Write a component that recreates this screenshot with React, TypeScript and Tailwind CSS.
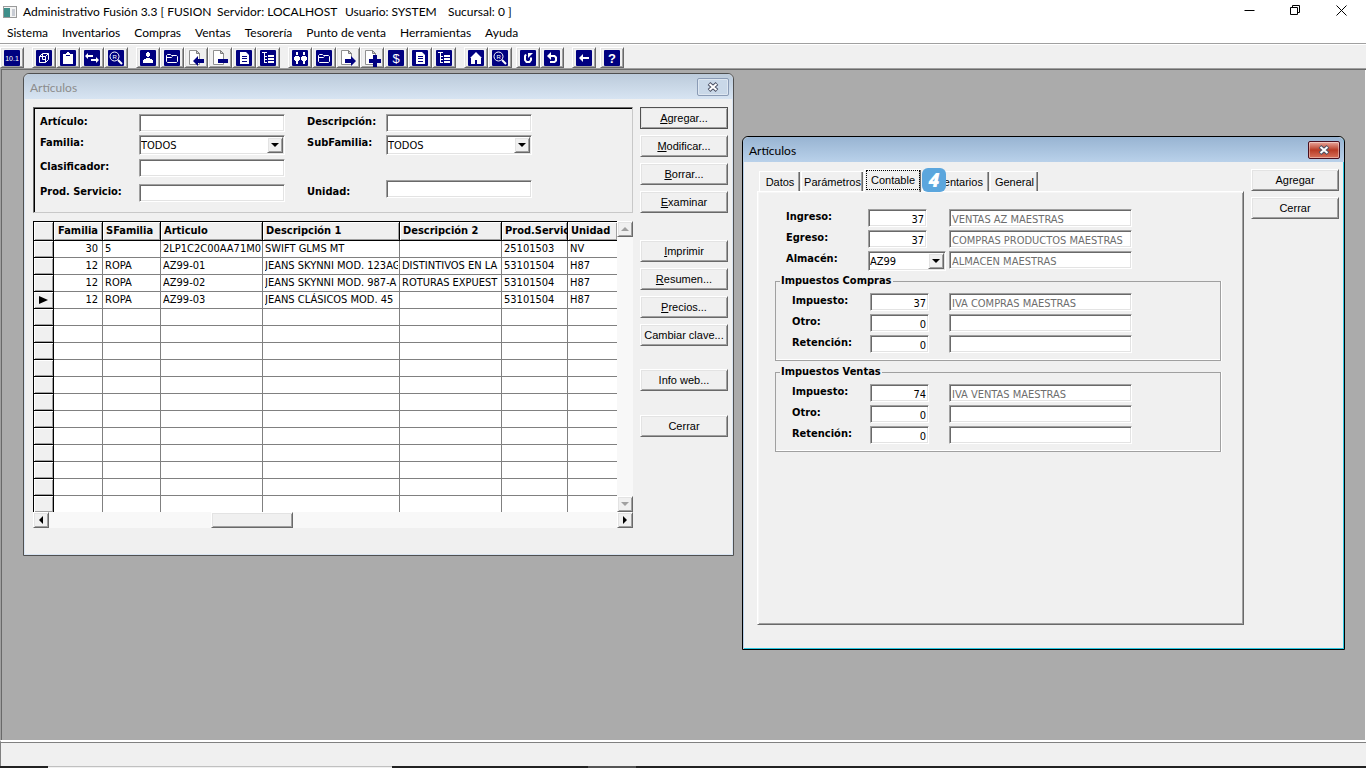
import { FC, ReactNode } from 'react'
import clsx from 'clsx'

const menus = ['Sistema', 'Inventarios', 'Compras', 'Ventas', 'Tesorería', 'Punto de venta', 'Herramientas', 'Ayuda']

const raised =
  'border border-t-white border-l-white border-r-[#696969] border-b-[#696969] bg-[#f0f0f0] shadow-[inset_1px_1px_0_#e3e3e3,inset_-1px_-1px_0_#a0a0a0]'
const sunken =
  'border border-t-[#a0a0a0] border-l-[#a0a0a0] border-r-white border-b-white bg-white shadow-[inset_1px_1px_0_#696969,inset_-1px_-1px_0_#e3e3e3]'
const tahoma = "font-['DejaVu_Sans_Condensed','Noto_Sans',sans-serif] text-[11px]"
const sansSerif = "font-['Liberation_Sans',sans-serif] text-[11px] leading-[14px]"
const segoe = "font-['Lato','Open_Sans',sans-serif] text-[12px] leading-[16px]"

// Toolbar glyphs, drawn on a 16x16 grid
const glyphs: Record<string, ReactNode> = {
  cube: <path fill="none" stroke="#fff" d="M3.5 6.5h6v6h-6zM3.5 6.5l3-3h6v6l-3 3M9.5 6.5l3-3M6.5 4v5.500h3" />,
  clipboard: <path fill="#fff" d="M3 4h3v2h4V4h3v10H3zM6 3h1V2h2v1h1v2H6z" />,
  swap: <path fill="#fff" d="M1 6l3-3v2h5v2H4v2zM15 10l-3-3v2H7v2h5v2z" />,
  search: (
    <g>
      <circle cx="6.500" cy="6.500" r="4.500" fill="none" stroke="#fff" />
      <path d="M10 10l4 4" stroke="#fff" strokeWidth="2" />
      <text x="4.500" y="9" fill="#fff" fontFamily="Liberation Sans" fontSize="6">R</text>
    </g>
  ),
  person: <path fill="#fff" d="M7 2h2v1h1v3H9v1H7V6H6V3h1zM6 8h4v1h2v1h1v3H3v-3h1V9h2z" />,
  folder: <path fill="none" stroke="#fff" d="M2.500 11.500v-6l1-1h3l1 1h5l1 1v5l-1 1h-9zM2.500 7.500h5l1-1" />,
  list: (
    <g>
      <path fill="#fff" d="M4 2h6l3 3v9H4z" />
      <path fill="#000080" d="M6 6h5v1H6zM6 8h5v1H6zM6 11h5v1H6z" />
    </g>
  ),
  tree: <path fill="#fff" d="M2 2h5v1H2zM4 3h1v10H4zM4 6h3v1H4zM8 5h6v2H8zM4 9h3v1H4zM8 8h6v2H8zM4 12h3v1H4zM8 11h6v2H8z" />,
  people: (
    <g fill="#fff">
      <path d="M4 2h2v3H4zM3 6h4v1h1v3H7v1H6v3H4v-3H3v-1H2V7h1z" />
      <path d="M11 2h2v3h-2zM10 6h4v1h1v3h-1v1h-1v3h-2v-3h-1v-1H9V7h1z" />
    </g>
  ),
  home: <path fill="#fff" d="M8 2l6 6h-1v6H9v-4H7v4H3V8H2z" />,
  redo: (
    <g>
      <path fill="none" stroke="#fff" strokeWidth="2" d="M6 4.500L5 6v4l1.500 2h3L11 10V7.500" />
      <path fill="#fff" d="M8 3h5L8 8z" />
    </g>
  ),
  undo: (
    <g>
      <path fill="none" stroke="#fff" strokeWidth="2" d="M6 6h4.500L12 7.500v3L10.500 12H6" />
      <path fill="#fff" d="M3 6l4-4v8z" />
    </g>
  ),
  back: <path fill="#fff" d="M3 8l4-4v3h6v2H7v3z" />,
}

const texts: Record<string, string> = { counter: '10.1', dollar: '$', help: '?' }

// Page icons carry a small sign in the lower right corner
const pageSigns: Record<string, string> = {
  pageLeft: 'M5 11l5-5v3h6v4h-6v3z',
  pageMinus: 'M6 9h10v4H6z',
  pageRight: 'M16 11l-5-5v3H5v4h6v3z',
  pagePlus: 'M9 5h4v4h4v4h-4v4H9v-4H5V9h4z',
}

const toolGroups = [
  { gap: 'mr-2', tools: ['counter'] },
  { gap: 'mr-2', tools: ['cube', 'clipboard', 'swap', 'search'] },
  { gap: 'mr-2', tools: ['person', 'folder', 'pageLeft', 'pageMinus', 'list', 'tree'] },
  { gap: 'mr-2', tools: ['people', 'folder', 'pageRight', 'pagePlus', 'dollar', 'list', 'tree'] },
  { gap: 'mr-1', tools: ['home', 'search'] },
  { gap: 'mr-2', tools: ['redo', 'undo'] },
  { gap: 'mr-1', tools: ['back'] },
  { gap: '', tools: ['help'] },
]

const ToolIcon: FC<{ name: string }> = ({ name }) => {
  if (pageSigns[name]) {
    return (
      <svg width="16" height="16" viewBox="0 0 16 16" className="overflow-visible">
        <path fill="#fff" stroke="#909090" d="M1.500.5h7l3 3v11h-10z" />
        <path fill="#d0d0d0" stroke="#808080" d="M8.500.5v3h3z" />
        <path fill="#000080" d={pageSigns[name]} />
      </svg>
    )
  }
  return (
    <svg width="16" height="16" viewBox="0 0 16 16">
      <rect width="16" height="16" rx="1" fill="#000080" />
      {glyphs[name]}
      {texts[name] && (
        <text
          x="8"
          y={name === 'counter' ? 11 : 13}
          textAnchor="middle"
          fill="#fff"
          fontFamily="Liberation Sans"
          fontSize={name === 'counter' ? 7 : 13}
          fontWeight={name === 'help' ? 700 : 400}
        >
          {texts[name]}
        </text>
      )}
    </svg>
  )
}

const Toolbar: FC = () => (
  <div className="flex border-t border-[#a0a0a0] bg-[#f0f0f0] pt-[3px] shadow-[inset_0_1px_0_#fff]">
    {toolGroups.map((group, i) => (
      <div key={i} className={clsx('flex', group.gap)}>
        {group.tools.map((tool) => (
          <button key={tool} aria-label={tool} className={clsx('flex h-[21px] w-6 items-center justify-center', raised)}>
            <ToolIcon name={tool} />
          </button>
        ))}
      </div>
    ))}
  </div>
)

const PushButton: FC<{ children: ReactNode; className?: string }> = ({ children, className }) => (
  <button className={clsx('h-[22px] w-[88px] whitespace-nowrap text-center', sansSerif, raised, className)}>{children}</button>
)

const TextBox: FC<{ id: string; value?: string; className?: string; right?: boolean; readOnly?: boolean; label?: string }> = ({
  id,
  value = '',
  className,
  right,
  readOnly,
  label,
}) => (
  <input
    id={id}
    aria-label={label}
    defaultValue={value}
    readOnly={readOnly}
    className={clsx(
      'h-[18px] px-[2px] pt-[2px] leading-[14px] outline-none',
      tahoma,
      sunken,
      right && 'text-right',
      readOnly && 'text-[#6d6d6d]',
      className,
    )}
  />
)

const Combo: FC<{ id: string; value: string; className?: string }> = ({ id, value, className }) => (
  <div className={clsx('relative h-5', className)}>
    <select id={id} defaultValue={value} className={clsx('block h-5 w-full appearance-none pt-[1px] pl-[1px] leading-[17px] outline-none', tahoma, sunken)}>
      <option>{value}</option>
    </select>
    <span className={clsx('pointer-events-none absolute top-[2px] right-[2px] flex h-4 w-4 items-center justify-center', raised)}>
      <svg width="8" height="4" viewBox="0 0 8 4">
        <path d="M0 0h8L4 4z" />
      </svg>
    </span>
  </div>
)

const Label: FC<{ htmlFor: string; children: ReactNode; className?: string }> = ({ htmlFor, children, className }) => (
  <label htmlFor={htmlFor} className={clsx('leading-[16px] font-bold whitespace-nowrap', tahoma, className)}>
    {children}
  </label>
)

const CloseButton: FC<{ active?: boolean }> = ({ active }) => (
  <button
    aria-label="Cerrar ventana"
    className={clsx(
      'flex h-[18px] w-8 items-center justify-center rounded-[2px] border shadow-[inset_0_0_0_1px_rgba(255,255,255,0.4)]',
      active ? 'border-[#4a0f1e] bg-linear-to-b from-[#e8a69c] via-[#b83a24] to-[#d8705a]' : 'border-[#8a9bb5] bg-[#c9d8e8]',
    )}
  >
    <svg width="12" height="10" viewBox="0 0 12 10">
      <path d="M2 1.500l8 7M10 1.500l-8 7" stroke="#4a5064" strokeWidth="4" />
      <path d="M2.500 2l7 6M9.500 2l-7 6" stroke="#fff" strokeWidth="2" />
    </svg>
  </button>
)

const columns = [
  { title: '', width: 'w-5' },
  { title: 'Familia', width: 'w-[49px]' },
  { title: 'SFamilia', width: 'w-[58px]' },
  { title: 'Articulo', width: 'w-[102px]' },
  { title: 'Descripción 1', width: 'w-[137px]' },
  { title: 'Descripción 2', width: 'w-[102px]' },
  { title: 'Prod.Servicio', width: 'w-[66px]' },
  { title: 'Unidad', width: 'w-[49px]' },
]

const articles = [
  ['30', '5', '2LP1C2C00AA71M0', 'SWIFT GLMS MT', '', '25101503', 'NV'],
  ['12', 'ROPA', 'AZ99-01', 'JEANS SKYNNI MOD. 123AG', 'DISTINTIVOS EN LA', '53101504', 'H87'],
  ['12', 'ROPA', 'AZ99-02', 'JEANS SKYNNI MOD. 987-A', 'ROTURAS EXPUEST', '53101504', 'H87'],
  ['12', 'ROPA', 'AZ99-03', 'JEANS CLÁSICOS MOD. 45', '', '53101504', 'H87'],
]
const rows = [...articles, ...Array.from({ length: 12 }, () => ['', '', '', '', '', '', ''])]

const ScrollArrow: FC<{ label: string; d: string; disabled?: boolean }> = ({ label, d, disabled }) => (
  <button aria-label={label} className={clsx('flex h-4 w-4 items-center justify-center', raised)}>
    <svg width="8" height="8" viewBox="0 0 8 8">
      <path d={d} fill={disabled ? '#a0a0a0' : '#000'} />
    </svg>
  </button>
)

const Grid: FC = () => (
  <div className="w-[600px]">
    <div className="flex">
      <table className={clsx('w-[584px] table-fixed border-separate border-spacing-0 border-l border-black bg-white leading-[14px]', tahoma)}>
        <thead>
          <tr>
            {columns.map((col, i) => (
              <th
                key={i}
                className={clsx(
                  'h-5 border-y border-black bg-[#f0f0f0] p-0 pl-[3px] font-bold shadow-[inset_1px_1px_0_#fff,inset_-1px_-1px_0_#a0a0a0]',
                  col.width,
                  i < 7 && 'border-r',
                  i === 1 ? 'pr-1 text-right' : 'text-left',
                )}
              >
                <div className="overflow-hidden whitespace-nowrap">{col.title}</div>
              </th>
            ))}
          </tr>
        </thead>
        <tbody>
          {rows.map((row, i) => (
            <tr key={i}>
              <th
                className={clsx(
                  'border-r border-black bg-[#f0f0f0] p-0 shadow-[inset_1px_1px_0_#fff,inset_-1px_-1px_0_#a0a0a0]',
                  i < 15 ? 'h-[17px] border-b' : 'h-4',
                )}
              >
                {i === 3 && (
                  <svg width="9" height="8" viewBox="0 0 9 8" className="mx-auto">
                    <path d="M0 0l9 4-9 4z" />
                  </svg>
                )}
              </th>
              {row.map((cell, j) => (
                <td
                  key={j}
                  className={clsx(
                    'border-[#808080] p-0 pl-[2px]',
                    j < 6 && 'border-r',
                    i < 15 ? 'h-[17px] border-b' : 'h-4',
                    j === 0 ? 'pr-1 text-right' : 'pr-[1px]',
                  )}
                >
                  <div className="overflow-hidden whitespace-nowrap">{cell}</div>
                </td>
              ))}
            </tr>
          ))}
        </tbody>
      </table>
      <div className="flex w-4 flex-col justify-between bg-[#f8f8f8]">
        <ScrollArrow label="Subir" d="M0 6l4-4 4 4z" disabled />
        <ScrollArrow label="Bajar" d="M0 2l4 4 4-4z" disabled />
      </div>
    </div>
    <div className="flex h-4 bg-[#f8f8f8]">
      <ScrollArrow label="Izquierda" d="M6 0L2 4l4 4z" />
      <div className="flex-1 pl-[162px]">
        <div className={clsx('h-4 w-[82px]', raised)} />
      </div>
      <ScrollArrow label="Derecha" d="M2 0l4 4-4 4z" />
    </div>
  </div>
)

const ListWindow: FC = () => (
  <section className="absolute top-1 left-[22px] h-[483px] w-[711px] rounded-t-md border border-[#505050] bg-[#f0f0f0] shadow-[inset_0_0_0_1px_#d9e4f1]">
    <header className="flex h-[25px] items-center justify-between rounded-t-md bg-linear-to-b from-[#bccbdb] to-[#d7e4f2] pr-1 pl-[6px]">
      <h2 className={clsx('pt-[2px] text-[#8c8c8c]', segoe)}>Artículos</h2>
      <CloseButton />
    </header>
    <div className="flex gap-[7px] px-[9px] pt-2">
      <div className="flex flex-col gap-2">
        <form className="flex h-[106px] w-[600px] gap-[22px] border border-t-[#696969] border-l-[#696969] border-r-[#c8c8c8] border-b-[#c8c8c8] pt-[6px] pl-[6px] shadow-[inset_1px_1px_0_#000]">
          <div className="grid grid-cols-[99px_146px] grid-rows-[21px_24px_25px_18px] content-start items-start">
            <Label htmlFor="articulo">Artículo:</Label>
            <TextBox id="articulo" />
            <Label htmlFor="familia">Familia:</Label>
            <Combo id="familia" value="TODOS" />
            <Label htmlFor="clasificador">Clasificador:</Label>
            <TextBox id="clasificador" />
            <Label htmlFor="servicio">Prod. Servicio:</Label>
            <TextBox id="servicio" />
          </div>
          <div className="grid grid-cols-[79px_146px] grid-rows-[21px_45px_18px] content-start items-start">
            <Label htmlFor="descripcion">Descripción:</Label>
            <TextBox id="descripcion" />
            <Label htmlFor="subfamilia">SubFamilia:</Label>
            <Combo id="subfamilia" value="TODOS" />
            <Label htmlFor="unidad" className="pt-1">Unidad:</Label>
            <TextBox id="unidad" />
          </div>
        </form>
        <Grid />
      </div>
      <div className="flex flex-col gap-[6px]">
        <PushButton className="outline-1 -outline-offset-1 outline-[#505050]"><u>A</u>gregar...</PushButton>
        <PushButton><u>M</u>odificar...</PushButton>
        <PushButton><u>B</u>orrar...</PushButton>
        <PushButton className="mb-[21px]"><u>E</u>xaminar</PushButton>
        <PushButton><u>I</u>mprimir</PushButton>
        <PushButton><u>R</u>esumen...</PushButton>
        <PushButton><u>P</u>recios...</PushButton>
        <PushButton className="mb-[17px]">Cambiar clave...</PushButton>
        <PushButton className="mb-[18px]">Info web...</PushButton>
        <PushButton>Cerrar</PushButton>
      </div>
    </div>
  </section>
)

const FieldRow: FC<{ id: string; label: string; code: string; text?: string; combo?: boolean }> = ({ id, label, code, text, combo }) => (
  <>
    <Label htmlFor={id}>{label}</Label>
    {combo ? <Combo id={id} value={code} className="w-[78px]" /> : <TextBox id={id} value={code} right className="w-[59px]" />}
    <TextBox id={`${id}-texto`} label={`${label} descripción`} value={text} readOnly />
  </>
)

const TaxGroup: FC<{ id: string; title: string; code: string; text: string }> = ({ id, title, code, text }) => (
  <fieldset className="h-[87px] w-[446px] border border-[#a0a0a0] pl-4 shadow-[inset_0_-1px_0_#fff,1px_0_0_#fff]">
    <legend className={clsx('-ml-3 bg-[#f0f0f0] px-[1px] leading-[14px] font-bold', tahoma)}>{title}</legend>
    <div className="grid grid-cols-[78px_79px_183px] grid-rows-[21px_21px_18px] items-start pt-[5px]">
      <FieldRow id={`${id}-impuesto`} label="Impuesto:" code={code} text={text} />
      <FieldRow id={`${id}-otro`} label="Otro:" code="0" />
      <FieldRow id={`${id}-retencion`} label="Retención:" code="0" />
    </div>
  </fieldset>
)

const tabs = [
  { title: 'Datos', width: 'w-[41px]' },
  { title: 'Parámetros', width: 'w-[62px]' },
  { title: 'Contable', width: 'w-[57px]' },
  { title: 'Inventarios', width: 'w-[67px]' },
  { title: 'General', width: 'w-[48px]' },
]

const DetailWindow: FC = () => (
  <section className="absolute top-[67px] left-[741px] h-[514px] w-[603px] rounded-t-md border border-black bg-[#f0f0f0] shadow-[inset_1px_0_0_#b9d1ea,inset_-1px_-1px_0_#2bc6e0]">
    <header className="flex h-[25px] items-center justify-between rounded-t-md bg-linear-to-b from-[#98b4d2] to-[#b9d1ea] pr-1 pl-[6px]">
      <h2 className={clsx('pt-[2px]', segoe)}>Artículos</h2>
      <CloseButton active />
    </header>
    <div className="flex gap-[7px] pt-[7px] pl-[14px]">
      <div>
        <div role="tablist" className="relative flex h-[22px] items-end pl-[2px]">
          {tabs.map((tab) => {
            const selected = tab.title === 'Contable'
            return (
              <button
                key={tab.title}
                role="tab"
                aria-selected={selected}
                className={clsx(
                  'mr-[1px] flex items-center justify-center border-t border-l border-white bg-[#f0f0f0] shadow-[inset_-1px_0_0_#696969,inset_-2px_0_0_#a0a0a0] last:mr-0',
                  sansSerif,
                  selected ? 'z-10 -mb-[1px] h-[23px]' : 'h-5',
                  tab.width,
                )}
              >
                {selected ? <span className="-mt-[2px] border border-dotted border-black px-1 py-[2px]">{tab.title}</span> : tab.title}
              </button>
            )
          })}
          <span className="absolute top-[-1px] left-[165px] z-20 flex h-6 w-6 items-center justify-center rounded-md bg-[#5ba6dd] font-['Open_Sans',sans-serif] text-[19px] leading-none font-extrabold text-white italic">
            4
          </span>
        </div>
        <div
          role="tabpanel"
          className="h-[434px] w-[487px] border border-t-white border-l-white border-r-[#696969] border-b-[#696969] pt-[17px] pl-[17px] shadow-[inset_1px_1px_0_#f6f6f6,inset_-1px_-1px_0_#a0a0a0]"
        >
          <div className="grid grid-cols-[82px_81px_183px] grid-rows-[21px_21px_20px] items-start pl-[11px]">
            <FieldRow id="ingreso" label="Ingreso:" code="37" text="VENTAS AZ MAESTRAS" />
            <FieldRow id="egreso" label="Egreso:" code="37" text="COMPRAS PRODUCTOS MAESTRAS" />
            <FieldRow id="almacen" label="Almacén:" code="AZ99" text="ALMACEN MAESTRAS" combo />
          </div>
          <div className="flex flex-col gap-1 pt-[3px]">
            <TaxGroup id="compras" title="Impuestos Compras" code="37" text="IVA COMPRAS MAESTRAS" />
            <TaxGroup id="ventas" title="Impuestos Ventas" code="74" text="IVA VENTAS MAESTRAS" />
          </div>
        </div>
      </div>
      <div className="flex flex-col gap-[6px]">
        <PushButton>Agregar</PushButton>
        <PushButton>Cerrar</PushButton>
      </div>
    </div>
  </section>
)

const App: FC = () => (
  <div className="flex min-h-screen flex-col bg-white text-black">
    <header className="flex h-[23px] items-center justify-between pl-[3px]">
      <div className="flex items-center">
        <svg width="14" height="12" viewBox="0 0 14 12" className="mr-[6px]">
          <rect x=".5" y=".5" width="13" height="11" fill="#f4f4f4" stroke="#9a9a9a" />
          <rect x="1" y="2" width="6" height="9" fill="#3f8f8a" />
          <rect x="9" y="3" width="3" height="7" fill="#c8ccd4" />
        </svg>
        <h1 className={clsx('flex whitespace-nowrap', segoe)}>
          <span className="w-[194px]">Administrativo Fusión 3.3 [ FUSION</span>
          <span className="w-32">Servidor: LOCALHOST</span>
          <span className="w-[103px]">Usuario: SYSTEM</span>
          <span>Sucursal: 0 ]</span>
        </h1>
      </div>
      <div className="flex pr-[2px] pb-[2px]">
        {['M.5 5.500h10', 'M.5 2.500h7v7h-7zM2.500 2.500v-2h7v7h-2', 'M.5.5l10 10M10.500.5l-10 10'].map((d, i) => (
          <button key={d} aria-label={['Minimizar', 'Restaurar', 'Cerrar'][i]} className="flex w-[46px] items-center justify-center">
            <svg width="11" height="11" viewBox="0 0 11 11" fill="none" stroke="#000">
              <path d={d} />
            </svg>
          </button>
        ))}
      </div>
    </header>
    <nav className={clsx('flex h-5 items-center gap-[14px] pl-[7px] whitespace-nowrap', segoe)}>
      {menus.map((menu) => (
        <button key={menu}>{menu}</button>
      ))}
    </nav>
    <Toolbar />
    <main className="relative min-h-[640px] flex-1 overflow-hidden border-t border-l border-[#a0a0a0] bg-[#ababab] shadow-[inset_1px_1px_0_#696969,inset_-1px_0_0_#fff]">
      <ListWindow />
      <DetailWindow />
    </main>
    <footer>
      <div className="h-[26px] border-t-2 border-l border-t-white border-l-[#808080] bg-[#f0f0f0] shadow-[inset_0_1px_0_#808080]" />
      <div className="flex h-[2px] bg-[#222]">
        <span className="ml-12 w-[344px] border-t border-[#c0c0c0] bg-[#f0f0f0]" />
        <span className="ml-[196px] w-12 bg-[#555]" />
      </div>
    </footer>
  </div>
)

export default App
